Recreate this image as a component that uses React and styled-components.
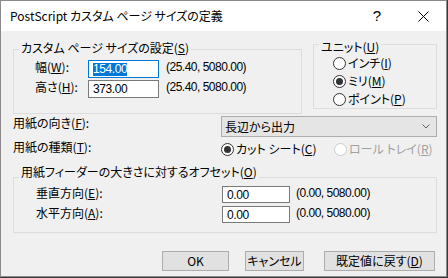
import styled, { createGlobalStyle } from "styled-components";

const GlobalStyle = createGlobalStyle`
  html, body {
    margin: 0;
    padding: 0;
    background: #3a3a3a;
  }
  #root {
    width: 448px;
    height: 278px;
  }
`;

const Window = styled.div`
  width: 447px;
  height: 277px;
  box-sizing: border-box;
  border: 1px solid #8a8a8a;
  background: #f0f0f0;
  display: flex;
  flex-direction: column;
  font-family: "Noto Sans CJK JP", sans-serif;
  font-feature-settings: "palt";
  font-size: 12px;
  line-height: 14px;
  color: #000;
`;

const TitleBar = styled.div`
  height: 30px;
  flex: none;
  background: #fff;
  display: flex;
  align-items: center;
  padding-left: 9px;
`;

const Title = styled.div`
  flex: 1;
  white-space: nowrap;
`;

const CaptionButton = styled.div`
  width: 46px;
  height: 30px;
  display: flex;
  align-items: center;
  justify-content: center;
  font-family: "Liberation Sans", sans-serif;
  font-size: 15px;
`;

const Body = styled.div`
  display: flex;
  flex-direction: column;
  padding: 0 9px 0 12px;
`;

const TopRow = styled.div`
  display: flex;
  align-items: flex-start;
  gap: 11px;
  margin-top: 13px;
`;

const Group = styled.div`
  width: ${(p) => p.$width}px;
  box-sizing: border-box;
  margin-top: ${(p) => p.$top || 0}px;
  border: 1px solid #dcdcdc;
  display: flex;
  flex-direction: column;
  padding-bottom: ${(p) => p.$bottom || 0}px;
`;

const Caption = styled.div`
  align-self: flex-start;
  margin: ${(p) => p.$lift}px 0 0 5px;
  padding: 0 2px;
  background: #f0f0f0;
  white-space: nowrap;
`;

const Rows = styled.div`
  display: flex;
  flex-direction: column;
  gap: ${(p) => p.$gap || 0}px;
  padding-top: ${(p) => p.$top || 0}px;
  padding-left: ${(p) => p.$left || 0}px;
`;

const FieldRow = styled.div`
  display: flex;
  align-items: flex-start;
`;

const Label = styled.div`
  width: ${(p) => p.$width}px;
  flex: none;
  white-space: nowrap;
  color: ${(p) => (p.$disabled ? "#a0a0a0" : "#000")};
`;

const Field = styled.div`
  width: ${(p) => p.$width}px;
  height: ${(p) => p.$height}px;
  box-sizing: border-box;
  flex: none;
  background: #fff;
  border: 1px solid ${(p) => (p.$focused ? "#0078d7" : "#7a7a7a")};
  padding-left: 4px;
  display: flex;
  align-items: center;
  font-family: "Liberation Sans", "Noto Sans CJK JP", sans-serif;
  font-size: 12px;
  letter-spacing: -0.4px;
`;

const Selected = styled.span`
  background: #0078d7;
  color: #fff;
  line-height: 13px;
`;

const Range = styled.div`
  margin-left: ${(p) => p.$gap}px;
  font-family: "Liberation Sans", "Noto Sans CJK JP", sans-serif;
  font-size: 12px;
  letter-spacing: -0.5px;
  white-space: nowrap;
`;

const RadioRow = styled.div`
  height: 18px;
  display: flex;
  align-items: center;
  gap: 2px;
  color: ${(p) => (p.$disabled ? "#a0a0a0" : "#000")};
  white-space: nowrap;
  width: ${(p) => (p.$width ? `${p.$width}px` : "auto")};
`;

const Circle = styled.span`
  width: 13px;
  height: 13px;
  box-sizing: border-box;
  flex: none;
  border-radius: 50%;
  border: 1px solid ${(p) => (p.$disabled ? "#cccccc" : "#333")};
  background: #fff;
  display: flex;
  align-items: center;
  justify-content: center;

  &::after {
    content: "";
    width: 7px;
    height: 7px;
    border-radius: 50%;
    background: ${(p) => (p.$checked ? "#333" : "transparent")};
  }
`;

const LineRow = styled.div`
  display: flex;
  align-items: flex-start;
  margin-top: ${(p) => p.$top}px;
`;

const Combo = styled.div`
  width: 217px;
  height: 21px;
  box-sizing: border-box;
  background: #e5e5e5;
  border: 1px solid #adadad;
  display: flex;
  align-items: center;
  justify-content: space-between;
  padding: 0 6px 0 3px;
`;

const ButtonRow = styled.div`
  display: flex;
  justify-content: flex-end;
  margin-top: 18px;
  padding-right: 2px;
`;

const Button = styled.div`
  width: ${(p) => p.$width}px;
  height: 20px;
  box-sizing: border-box;
  margin-left: ${(p) => p.$gap || 0}px;
  background: #e1e1e1;
  border: 1px solid #adadad;
  display: flex;
  align-items: center;
  justify-content: center;
  white-space: nowrap;
`;

const Radio = ({ checked, disabled, width, children }) => (
  <RadioRow $disabled={disabled} $width={width}>
    <Circle $checked={checked} $disabled={disabled} />
    <span>{children}</span>
  </RadioRow>
);

export default function App() {
  return (
    <>
      <GlobalStyle />
      <Window>
        <TitleBar>
          <Title>PostScript カスタム ページ サイズの定義</Title>
          <CaptionButton>?</CaptionButton>
          <CaptionButton>
            <svg width="11" height="11" viewBox="0 0 11 11">
              <path d="M0.5 0.5 L10.5 10.5 M10.5 0.5 L0.5 10.5" stroke="#000" strokeWidth="1" />
            </svg>
          </CaptionButton>
        </TitleBar>
        <Body>
          <TopRow>
            <Group $width={289} $top={5} $bottom={15}>
              <Caption $lift={-9}>
                カスタム ページ サイズの設定(<u>S</u>)
              </Caption>
              <Rows $top={5} $gap={2} $left={21}>
                <FieldRow>
                  <Label $width={53}>
                    幅(<u>W</u>):
                  </Label>
                  <Field $width={71} $height={18} $focused>
                    <Selected>154.00</Selected>
                  </Field>
                  <Range $gap={7}>(25.40, 5080.00)</Range>
                </FieldRow>
                <FieldRow>
                  <Label $width={53}>
                    高さ(<u>H</u>):
                  </Label>
                  <Field $width={71} $height={18}>
                    373.00
                  </Field>
                  <Range $gap={7}>(25.40, 5080.00)</Range>
                </FieldRow>
              </Rows>
            </Group>
            <Group $width={124}>
              <Caption $lift={-5}>
                ユニット(<u>U</u>)
              </Caption>
              <Rows $left={19}>
                <Radio>
                  インチ(<u>I</u>)
                </Radio>
                <Radio checked>
                  ミリ(<u>M</u>)
                </Radio>
                <Radio>
                  ポイント(<u>P</u>)
                </Radio>
              </Rows>
            </Group>
          </TopRow>

          <LineRow $top={2}>
            <Label $width={208}>
              用紙の向き(<u>F</u>):
            </Label>
            <Combo>
              <span>長辺から出力</span>
              <svg width="8" height="5" viewBox="0 0 8 5">
                <path d="M0.5 0.5 L4 4 L7.5 0.5" stroke="#606060" strokeWidth="1" fill="none" />
              </svg>
            </Combo>
          </LineRow>

          <LineRow $top={3}>
            <Label $width={208}>
              用紙の種類(<u>T</u>):
            </Label>
            <Radio checked width={113}>
              カット シート(<u>C</u>)
            </Radio>
            <Radio disabled>
              ロール トレイ(<u>R</u>)
            </Radio>
          </LineRow>

          <Group $width={424} $top={19} $bottom={9}>
            <Caption $lift={-13}>
              用紙フィーダーの大きさに対するオフセット(<u>O</u>)
            </Caption>
            <Rows $top={7} $gap={3} $left={22}>
              <FieldRow>
                <Label $width={186}>
                  垂直方向(<u>E</u>):
                </Label>
                <Field $width={68} $height={17}>
                  0.00
                </Field>
                <Range $gap={6}>(0.00, 5080.00)</Range>
              </FieldRow>
              <FieldRow>
                <Label $width={186}>
                  水平方向(<u>A</u>):
                </Label>
                <Field $width={68} $height={17}>
                  0.00
                </Field>
                <Range $gap={6}>(0.00, 5080.00)</Range>
              </FieldRow>
            </Rows>
          </Group>

          <ButtonRow>
            <Button $width={67}>OK</Button>
            <Button $width={59} $gap={16}>
              キャンセル
            </Button>
            <Button $width={111} $gap={20}>
              既定値に戻す(<u>D</u>)
            </Button>
          </ButtonRow>
        </Body>
      </Window>
    </>
  );
}
